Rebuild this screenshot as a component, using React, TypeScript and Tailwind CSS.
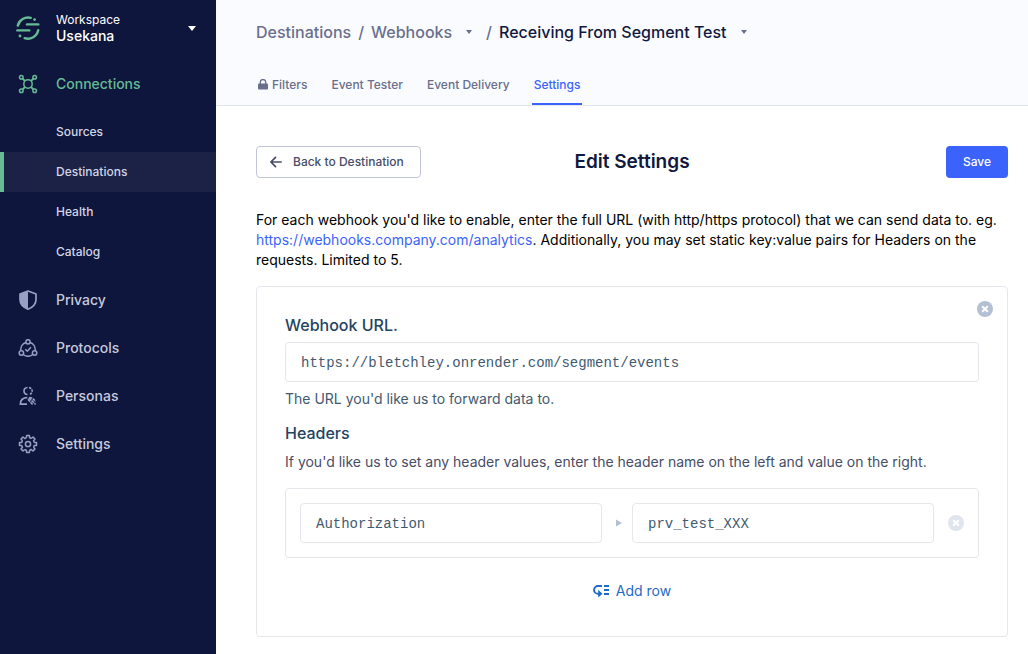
import React from 'react';

type NavItem = { label: string; icon: React.ReactNode };

function SegmentLogo() {
  return (
    <svg width="24" height="26" viewBox="0 0 24 26" fill="none" stroke="#66bb94" strokeWidth="2.4" strokeLinecap="round">
      <path d="M1.8 10.6A10.6 10.6 0 0 1 14.8 2.8" />
      <path d="M22.2 15.2A10.6 10.6 0 0 1 8.6 23.2" />
      <path d="M11 9.4h11.3" />
      <path d="M1.4 15.4h11.9" />
      <circle cx="18.6" cy="4.6" r="1.4" fill="#66bb94" stroke="none" />
      <circle cx="4" cy="21" r="1.4" fill="#66bb94" stroke="none" />
    </svg>
  );
}

function ConnectionsIcon() {
  return (
    <svg width="20" height="20" viewBox="0 0 20 20" fill="none" stroke="#66bb94" strokeWidth="1.5">
      <circle cx="3.3" cy="3.3" r="1.800" />
      <circle cx="16.7" cy="3.3" r="1.800" />
      <circle cx="3.3" cy="16.7" r="1.800" />
      <circle cx="16.7" cy="16.7" r="1.800" />
      <circle cx="10" cy="10" r="4.200" />
      <path d="M4.600 4.600l2.400 2.400M15.400 4.600L13 7M4.600 15.400L7 13M15.400 15.400L13 13" strokeWidth="1.800" />
    </svg>
  );
}

function PrivacyIcon() {
  return (
    <svg width="18" height="20" viewBox="0 0 18 20" fill="none">
      <path d="M9 1L17 4v5.500c0 4.300-3.300 7.800-8 9.700-4.700-1.900-8-5.400-8-9.700V4z" stroke="#9a9fc4" strokeWidth="1.700" strokeLinejoin="round" />
      <path d="M9 1v18.200C4.300 17.300 1 13.800 1 9.500V4z" fill="#9a9fc4" />
    </svg>
  );
}

function ProtocolsIcon() {
  return (
    <svg width="20" height="18" viewBox="0 0 20 18" fill="none" stroke="#9a9fc4" strokeWidth="1.5">
      <circle cx="10" cy="2.800" r="2.100" />
      <circle cx="3.400" cy="14" r="2.200" />
      <circle cx="16.600" cy="14" r="2.200" />
      <path d="M7.900 3.500A7.500 7.500 0 0 0 2.900 11.700M12.100 3.500A7.500 7.500 0 0 1 17.100 11.700M5.200 15.500A8 8 0 0 0 14.800 15.500" />
      <path d="M7.300 10.200l2 2 3.600-4" />
    </svg>
  );
}

function PersonasIcon() {
  return (
    <svg width="18" height="20" viewBox="0 0 18 20" fill="none" stroke="#9a9fc4" strokeWidth="1.600">
      <path d="M8.500 1.500C6.200 1.700 5 3.200 5 5s1.200 3.300 3.500 3.500" />
      <path d="M10 1.600C12 1.900 13.100 3.300 13.100 5S12 8.100 10 8.400" strokeDasharray="2.400 0.900" />
      <path d="M8.300 11.600C4.200 11.600 1.500 14 1.300 18.100H8" />
      <path d="M10.400 11.500c3 .3 5 2.100 5.900 4.400" strokeDasharray="2.800 0.800" />
      <path d="M9 13.200l4.600 5.400M9.800 11.600l6.800 6.900" strokeDasharray="3.200 0.800" />
    </svg>
  );
}

function GearIcon() {
  const teeth = [0, 45, 90, 135, 180, 225, 270, 315];
  return (
    <svg width="20" height="20" viewBox="-10 -10 20 20" fill="none" stroke="#9a9fc4" strokeWidth="1.5" strokeLinejoin="round">
      <circle r="2.6" />
      {teeth.map((a) => (
        <path key={a} transform={`rotate(${a})`} d="M-1.600 -6.200L-1.400 -8.500H1.400L1.600 -6.200C2.300 -6 2.900 -5.700 3.300 -5.500" />
      ))}
    </svg>
  );
}

function CloseBadge() {
  return (
    <svg width="16" height="16" viewBox="0 0 16 16">
      <circle cx="8" cy="8" r="8" fill="#b3c0d4" />
      <path d="M5.200 5.200l5.600 5.600M10.800 5.200l-5.600 5.600" stroke="#fff" strokeWidth="2.100" />
    </svg>
  );
}

function Caret() {
  return (
    <svg width="6" height="4" viewBox="0 0 6 4">
      <path d="M0 0h6L3 4z" fill="#696f8c" />
    </svg>
  );
}

const subItems = ['Sources', 'Destinations', 'Health', 'Catalog'];

const navItems: NavItem[] = [
  { label: 'Privacy', icon: <PrivacyIcon /> },
  { label: 'Protocols', icon: <ProtocolsIcon /> },
  { label: 'Personas', icon: <PersonasIcon /> },
  { label: 'Settings', icon: <GearIcon /> },
];

function Sidebar() {
  return (
    <nav className="w-[216px] shrink-0 bg-[#0f163d]">
      <button type="button" className="flex h-14 w-full items-center pr-5 text-left text-white">
        <span className="flex w-14 justify-center">
          <SegmentLogo />
        </span>
        <span className="flex flex-1 flex-col">
          <span className="text-xs leading-4">Workspace</span>
          <span className="text-sm leading-4 font-medium">Usekana</span>
        </span>
        <svg width="8" height="5" viewBox="0 0 8 5">
          <path d="M0 0h8L4 5z" fill="#fff" />
        </svg>
      </button>
      <a href="#connections" className="mt-1 flex h-12 items-center text-sm font-medium text-[#66bb94]">
        <span className="flex w-14 justify-center">
          <ConnectionsIcon />
        </span>
        Connections
      </a>
      <ul className="mt-1">
        {subItems.map((label) => (
          <li key={label}>
            <a
              href={`#${label.toLowerCase()}`}
              className={
                label === 'Destinations'
                  ? 'flex h-10 items-center border-l-4 border-[#66bb94] bg-[#1c2246] pl-[52px] text-xs font-medium text-[#d2d5e5]'
                  : 'flex h-10 items-center pl-14 text-xs font-medium text-[#d2d5e5]'
              }
            >
              {label}
            </a>
          </li>
        ))}
      </ul>
      <ul className="mt-1">
        {navItems.map((item) => (
          <li key={item.label}>
            <a href={`#${item.label.toLowerCase()}`} className="flex h-12 items-center text-sm font-medium text-[#c6c9dc]">
              <span className="flex w-14 justify-center">{item.icon}</span>
              {item.label}
            </a>
          </li>
        ))}
      </ul>
    </nav>
  );
}

function Header() {
  return (
    <header className="border-b border-[#e4e6ef] bg-[#fafbff] pl-10">
      <div className="flex h-16 items-center text-base font-medium text-[#696f8c]">
        <a href="#destinations">Destinations</a>
        <span className="px-[7px]">/</span>
        <a href="#webhooks">Webhooks</a>
        <button type="button" aria-label="Switch destination" className="px-3.5 py-2">
          <Caret />
        </button>
        <span className="pr-[7px]">/</span>
        <a href="#receiving" className="text-[#101840]">Receiving From Segment Test</a>
        <button type="button" aria-label="Switch source" className="px-3.5 py-2">
          <Caret />
        </button>
      </div>
      <div className="flex h-[41px] gap-5 text-xs font-medium text-[#696f8c]">
        <a href="#filters" className="flex items-center gap-1 px-0.5">
          <svg width="10" height="11" viewBox="0 0 10 11">
            <rect y="4.500" width="10" height="6" rx="1" fill="#696f8c" />
            <path d="M2.300 5V3.200a2.700 2.700 0 0 1 5.400 0V5" fill="none" stroke="#696f8c" strokeWidth="1.300" />
          </svg>
          Filters
        </a>
        <a href="#tester" className="flex items-center px-0.5">Event Tester</a>
        <a href="#delivery" className="flex items-center px-0.5">Event Delivery</a>
        <a href="#settings" className="flex items-center border-b-2 border-[#3b63fb] px-0.5 pt-0.5 text-[#3b63fb]">Settings</a>
      </div>
    </header>
  );
}

const inputClass =
  "h-10 w-full min-w-0 rounded border border-[#e4e7eb] bg-white px-[15px] pt-0.5 font-['Liberation_Mono',monospace] text-sm text-[#425a70] outline-none";

export default function App() {
  return (
    <div className="flex min-h-screen bg-white font-['Inter',sans-serif]">
      <Sidebar />
      <div className="min-w-0 flex-1">
        <Header />
        <main className="pt-10 pr-5 pb-4 pl-10">
          <div className="grid grid-cols-[1fr_auto_1fr] items-center">
            <button
              type="button"
              className="flex h-8 items-center gap-[11px] justify-self-start rounded border border-[#c1c4d6] px-[13px] pr-4 text-xs font-medium text-[#474d66]"
            >
              <svg width="12" height="12" viewBox="0 0 12 12" fill="none" stroke="#474d66" strokeWidth="1.700" strokeLinecap="round" strokeLinejoin="round">
                <path d="M11.200 6H1M5.500 1.300L.9 6l4.600 4.700" />
              </svg>
              Back to Destination
            </button>
            <h1 className="text-[19px] leading-7 font-semibold text-[#101840]">Edit Settings</h1>
            <button type="button" className="h-8 justify-self-end rounded bg-[#3b63fb] px-[17px] text-xs font-medium text-white">
              Save
            </button>
          </div>

          <p className="mt-8 text-sm text-black">
            For each webhook you'd like to enable, enter the full URL (with http/https protocol) that we can send data to. eg.{' '}
            <a href="#analytics" className="text-[#3b63fb]">https://webhooks.company.com/analytics</a>. Additionally, you may set
            static key:value pairs for Headers on the requests. Limited to 5.
          </p>

          <form className="relative mt-4 rounded border border-[#e4e7eb] px-7 pt-7 pb-[35px]">
            <button type="button" aria-label="Remove webhook" className="absolute top-3.5 right-3.5">
              <CloseBadge />
            </button>
            <label htmlFor="webhook-url" className="block text-base leading-5 font-medium text-[#234361]">
              Webhook URL.
            </label>
            <input id="webhook-url" className={`${inputClass} mt-[7px]`} defaultValue="https://bletchley.onrender.com/segment/events" />
            <p className="mt-[7px] text-sm text-[#425a70]">The URL you'd like us to forward data to.</p>
            <h2 className="mt-3.5 text-base leading-5 font-medium text-[#234361]">Headers</h2>
            <p className="mt-[9px] text-sm text-[#474d66]">
              If you'd like us to set any header values, enter the header name on the left and value on the right.
            </p>

            <div className="mt-4 flex items-center rounded border border-[#e4e7eb] p-3.5">
              <input aria-label="Header name" className={inputClass} defaultValue="Authorization" />
              <span className="flex w-[30px] shrink-0 justify-center pl-1">
                <svg width="6" height="8" viewBox="0 0 6 8">
                  <path d="M0 .5l6 3.500-6 3.500z" fill="#b3c0d4" />
                </svg>
              </span>
              <input aria-label="Header value" className={inputClass} defaultValue="prv_test_XXX" />
              <button type="button" aria-label="Remove header" disabled className="ml-3.5 shrink-0 opacity-40">
                <CloseBadge />
              </button>
            </div>

            <button type="button" className="mx-auto mt-[23px] flex items-center gap-[7px] text-sm text-[#1f6bc6]">
              <svg width="16" height="14" viewBox="0 0 16 14" fill="#1f6bc6">
                <path d="M9 2H5a3.900 3.900 0 0 0 0 7.800H6" fill="none" stroke="#1f6bc6" strokeWidth="2" />
                <path d="M5.200 5.800l4.300 3.900L5.200 13.600z" />
                <path d="M11 1h5v2h-5zM11 5h5v2h-5zM11 9h5v2h-5z" />
              </svg>
              Add row
            </button>
          </form>
        </main>
      </div>
    </div>
  );
}
